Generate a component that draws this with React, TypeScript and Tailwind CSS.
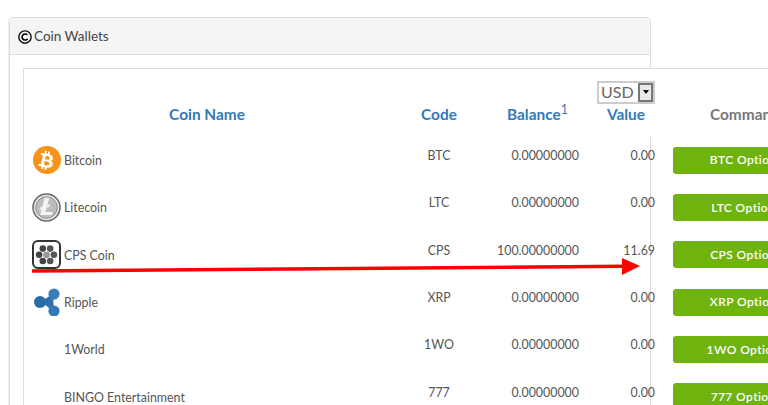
import { FaBtc, FaRegCopyright } from "react-icons/fa";

interface Coin {
  name: string;
  code: string;
  balance: string;
  value: string;
  icon?: "btc" | "ltc" | "cps" | "xrp";
}

const coins: Coin[] = [
  { name: "Bitcoin", code: "BTC", balance: "0.00000000", value: "0.00", icon: "btc" },
  { name: "Litecoin", code: "LTC", balance: "0.00000000", value: "0.00", icon: "ltc" },
  { name: "CPS Coin", code: "CPS", balance: "100.00000000", value: "11.69", icon: "cps" },
  { name: "Ripple", code: "XRP", balance: "0.00000000", value: "0.00", icon: "xrp" },
  { name: "1World", code: "1WO", balance: "0.00000000", value: "0.00" },
  { name: "BINGO Entertainment", code: "777", balance: "0.00000000", value: "0.00" },
];

const columns = "grid grid-cols-[366px_98px_91px_76px_1fr]";

function CoinIcon({ icon }: { icon?: Coin["icon"] }) {
  if (icon === "btc") {
    return (
      <div className="flex h-[28px] w-[28px] items-center justify-center rounded-full bg-[#f7931a]">
        <FaBtc className="rotate-[12deg] text-[19px] text-white" />
      </div>
    );
  }
  if (icon === "ltc") {
    return (
      <svg width="29" height="29" viewBox="0 0 29 29">
        <circle cx="14.5" cy="14.5" r="13.5" fill="#e8e8e8" stroke="#6a6a6a" strokeWidth="1.6" />
        <circle cx="14.5" cy="14.5" r="10.8" fill="#bdbdbd" stroke="#8c8c8c" strokeWidth="1" />
        <path d="M12.600 4.800h4.800l-2.100 7.400 2.900-1.100-.7 2.600-2.900 1.100-1.100 4.100h7.300l-.9 3.200H8l1.700-6-2.300.9.600-2.500 2.400-.9z" fill="#f4f4f4" />
      </svg>
    );
  }
  if (icon === "cps") {
    return (
      <svg width="29" height="29" viewBox="0 0 29 29">
        <rect x="1" y="1" width="27" height="27" rx="5" fill="#fff" stroke="#333" strokeWidth="2" />
        <circle cx="10.8" cy="8.6" r="3.3" fill="#444" />
        <circle cx="18.2" cy="8.6" r="3.3" fill="#555" />
        <circle cx="7.1" cy="14.8" r="3.3" fill="#444" />
        <circle cx="14.5" cy="14.8" r="3.4" fill="#999" />
        <circle cx="21.9" cy="14.8" r="3.3" fill="#555" />
        <circle cx="10.8" cy="21" r="3.3" fill="#444" />
        <circle cx="18.2" cy="21" r="3.3" fill="#555" />
      </svg>
    );
  }
  if (icon === "xrp") {
    return (
      <svg width="28" height="28" viewBox="0 0 28 28">
        <path d="M7 14 Q14 14 21 6 Q16 14 21 23 Q14 14 7 14Z" fill="#2f73ad" stroke="#2f73ad" strokeWidth="3.500" strokeLinejoin="round" />
        <circle cx="7" cy="14" r="6" fill="#2b6ba6" />
        <circle cx="21" cy="6" r="5.600" fill="#3a7fb8" />
        <circle cx="21" cy="23" r="5.600" fill="#3379b3" />
      </svg>
    );
  }
  return null;
}

export default function App() {
  return (
    <div className="relative h-[405px] w-[768px] overflow-hidden bg-white pl-[9px] pt-[17px] font-['Lato','Open_Sans',sans-serif] text-[12.4px] text-[#555]">
      <div className="w-[642px] rounded-t-[5px] border-x border-t border-[#ddd] shadow-[-1px_0_1px_#eee]">
        <div className="flex h-[37px] items-center gap-[2px] rounded-t-[5px] border-b border-[#ddd] bg-[#f5f5f5] pl-[8px] pt-[1px] text-[13.5px] text-[#444]">
          <FaRegCopyright className="text-[14px] text-black" />
          <span>Coin Wallets</span>
        </div>

        <div className="pl-[13px] pt-[13px]">
          <div className="w-[800px] border-l border-t border-[#ddd]">
            <div className={`${columns} h-[67.6px] items-end bg-white pb-[10.5px] text-[15.4px] font-bold`}>
              <div className="text-center text-[#337ab7]">Coin Name</div>
              <div className="text-center text-[#337ab7]">Code</div>
              <div className="pl-[19px] text-[#337ab7]">
                Balance<sup className="text-[12.5px] font-normal">1</sup>
              </div>
              <div className="relative text-center text-[#337ab7]">
                <div className="absolute -top-[22px] left-[18px] flex h-[23px] w-[58px] items-center justify-between border-2 border-[#ccc] bg-white pl-[2px] text-[16px] font-normal text-[#666]">
                  USD
                  <span className="flex h-full w-[15px] items-center justify-center border-2 border-[#777] bg-[#e8e8e8]">
                    <span className="h-0 w-0 border-x-[3.5px] border-t-[4px] border-x-transparent border-t-black" />
                  </span>
                </div>
                <span className="ml-[18px]">Value</span>
              </div>
              <div className="pl-[55px] text-[#777]">Commands</div>
            </div>

            {coins.map((coin) => (
              <div key={coin.code} className={`${columns} h-[47.33px]`}>
                <div className="flex items-center gap-[2px] pl-[8px]">
                  <div className="-ml-[1px] flex w-[31px] justify-center">
                    <CoinIcon icon={coin.icon} />
                  </div>
                  <span className="pt-[2px]">{coin.name}</span>
                </div>
                <div className="pt-[10.5px] text-center">{coin.code}</div>
                <div className="pt-[10.5px] text-right">{coin.balance}</div>
                <div className="pt-[10.5px] text-right">{coin.value}</div>
                <div className="flex items-center pl-[18px]">
                  <button className="h-[27px] w-[146px] rounded-[3px] bg-[#6fb30f] text-[12px] font-semibold tracking-[0.4px] text-white">
                    {coin.code} Options
                  </button>
                </div>
              </div>
            ))}
          </div>
        </div>
      </div>

      <svg className="absolute left-0 top-0" width="768" height="405">
        <line x1="32" y1="271" x2="624" y2="266.300" stroke="#fe0000" strokeWidth="3.500" />
        <polygon points="622,258 640,266 622,275" fill="#fe0000" />
      </svg>
    </div>
  );
}
